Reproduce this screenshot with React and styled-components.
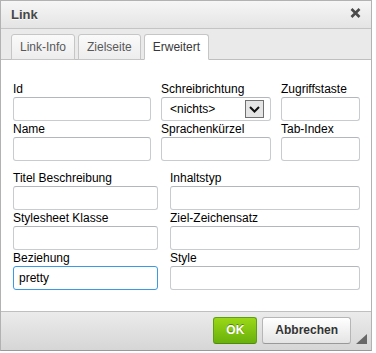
import React from "react";
import styled, { createGlobalStyle } from "styled-components";

const GlobalStyle = createGlobalStyle`
  html, body { margin: 0; padding: 0; background: #fff; }
  body { font-family: "Liberation Sans", Arial, sans-serif; font-size: 12px; color: #000; }
  * { box-sizing: border-box; }
`;

const Dialog = styled.div`
  width: 372px;
  border: 1px solid #b2b2b2;
  border-bottom-color: #999;
  background: #eaeaea;
  display: flex;
  flex-direction: column;
`;

const TitleBar = styled.div`
  height: 28px;
  display: flex;
  align-items: center;
  justify-content: space-between;
  padding: 0 10px;
  background: linear-gradient(#f6f6f6, #e4e4e4);
  border-bottom: 1px solid #c4c4c4;
`;

const Title = styled.div`
  font-size: 13px;
  font-weight: bold;
  color: #474747;
  text-shadow: 0 1px 0 rgba(255, 255, 255, 0.75);
`;

const CloseButton = styled.button`
  border: 0;
  padding: 0;
  margin: -3px 0 0 0;
  background: none;
  width: 11px;
  height: 10px;
  display: flex;
  cursor: pointer;
`;

const TabStrip = styled.div`
  display: flex;
  align-items: flex-end;
  gap: 3px;
  padding: 5px 0 0 10px;
  border-bottom: 1px solid #bfbfbf;
  background: #eaeaea;
`;

const Tab = styled.div`
  padding: 4px 8px;
  line-height: 16px;
  font-size: 12px;
  color: ${(p) => (p.$active ? "#383838" : "#595959")};
  border: 1px solid #c6c6c6;
  border-bottom-color: ${(p) => (p.$active ? "#fff" : "#c6c6c6")};
  border-radius: 3px 3px 0 0;
  background: ${(p) => (p.$active ? "#fff" : "linear-gradient(#fafafa, #ededed)")};
  margin-bottom: -1px;
  cursor: pointer;
`;

const Content = styled.div`
  background: #fff;
  padding: 22px 11px 21px 12px;
  display: flex;
  flex-direction: column;
  gap: 10px;
`;

const Group = styled.div`
  display: grid;
  grid-template-columns: ${(p) => p.$cols};
  column-gap: ${(p) => p.$gap};
  row-gap: 1px;
`;

const Field = styled.div`
  display: flex;
  flex-direction: column;
  min-width: 0;
`;

const Label = styled.label`
  line-height: 14px;
  margin-bottom: 1px;
  font-size: 12px;
  color: #000;
  white-space: nowrap;
`;

const TextInput = styled.input`
  height: 24px;
  width: 100%;
  border: 1px solid ${(p) => (p.$focused ? "#3a9ae6" : "#c9cccf")};
  border-top-color: ${(p) => (p.$focused ? "#3a9ae6" : "#b3b7bc")};
  border-radius: 3px;
  padding: 3px 5px;
  font-family: "Liberation Sans", Arial, sans-serif;
  font-size: 12px;
  color: #000;
  outline: none;
  background: #fff;
`;

const SelectBox = styled.div`
  height: 24px;
  border: 1px solid #c9cccf;
  border-top-color: #b3b7bc;
  border-radius: 3px;
  display: flex;
  align-items: center;
  justify-content: space-between;
  padding: 0 6px 0 8px;
  font-size: 12px;
  color: #000;
  background: #fff;
`;

const SelectArrow = styled.span`
  width: 19px;
  height: 18px;
  border: 1px solid #707070;
  background: #e5e5e5;
  display: flex;
  align-items: center;
  justify-content: center;
`;

const Footer = styled.div`
  display: flex;
  justify-content: flex-end;
  gap: 5px;
  padding: 5px 4px 6px;
  border-top: 1px solid #bfbfbf;
  background: linear-gradient(#ebebeb, #d5d6d5);
`;

const Button = styled.button`
  padding: 4px 12px;
  line-height: 17px;
  font-family: "Liberation Sans", Arial, sans-serif;
  font-size: 12px;
  font-weight: bold;
  border-radius: 3px;
  cursor: pointer;
  border: 1px solid ${(p) => (p.$primary ? "#5f9e12" : "#b6b6b6")};
  border-bottom-color: ${(p) => (p.$primary ? "#4f8a0b" : "#999")};
  color: ${(p) => (p.$primary ? "#fff" : "#333")};
  background: ${(p) =>
    p.$primary ? "linear-gradient(#9ad717, #69b10b)" : "linear-gradient(#fff, #e4e4e4)"};
  text-shadow: ${(p) => (p.$primary ? "0 -1px 0 #55830c" : "0 1px 0 rgba(255,255,255,.5)")};
`;

const Grip = styled.svg`
  align-self: flex-end;
  width: 11px;
  height: 10px;
`;

export default function App() {
  return (
    <>
      <GlobalStyle />
      <Dialog>
        <TitleBar>
          <Title>Link</Title>
          <CloseButton aria-label="Schließen">
            <svg width="11" height="10" viewBox="0 0 11 10">
              <path d="M1.5 1 L9.5 9 M9.5 1 L1.5 9" stroke="#4a4a4a" strokeWidth="2.6" strokeLinecap="butt" />
            </svg>
          </CloseButton>
        </TitleBar>
        <TabStrip>
          <Tab>Link-Info</Tab>
          <Tab>Zielseite</Tab>
          <Tab $active>Erweitert</Tab>
        </TabStrip>
        <Content>
          <Group $cols="138px 110px 79px" $gap="10px">
            <Field>
              <Label>Id</Label>
              <TextInput />
            </Field>
            <Field>
              <Label>Schreibrichtung</Label>
              <SelectBox>
                <span>&lt;nichts&gt;</span>
                <SelectArrow>
                  <svg width="11" height="7" viewBox="0 0 11 7">
                    <path d="M1 1 L5.5 5.5 L10 1" fill="none" stroke="#111" strokeWidth="2" />
                  </svg>
                </SelectArrow>
              </SelectBox>
            </Field>
            <Field>
              <Label>Zugriffstaste</Label>
              <TextInput />
            </Field>
            <Field>
              <Label>Name</Label>
              <TextInput />
            </Field>
            <Field>
              <Label>Sprachenkürzel</Label>
              <TextInput />
            </Field>
            <Field>
              <Label>Tab-Index</Label>
              <TextInput />
            </Field>
          </Group>
          <Group $cols="145px 190px" $gap="12px">
            <Field>
              <Label>Titel Beschreibung</Label>
              <TextInput />
            </Field>
            <Field>
              <Label>Inhaltstyp</Label>
              <TextInput />
            </Field>
            <Field>
              <Label>Stylesheet Klasse</Label>
              <TextInput />
            </Field>
            <Field>
              <Label>Ziel-Zeichensatz</Label>
              <TextInput />
            </Field>
            <Field>
              <Label>Beziehung</Label>
              <TextInput $focused defaultValue="pretty" />
            </Field>
            <Field>
              <Label>Style</Label>
              <TextInput />
            </Field>
          </Group>
        </Content>
        <Footer>
          <Button $primary>OK</Button>
          <Button>Abbrechen</Button>
          <Grip viewBox="0 0 11 10">
            <polygon points="11,0 11,10 0,10" fill="#676767" />
          </Grip>
        </Footer>
      </Dialog>
    </>
  );
}
